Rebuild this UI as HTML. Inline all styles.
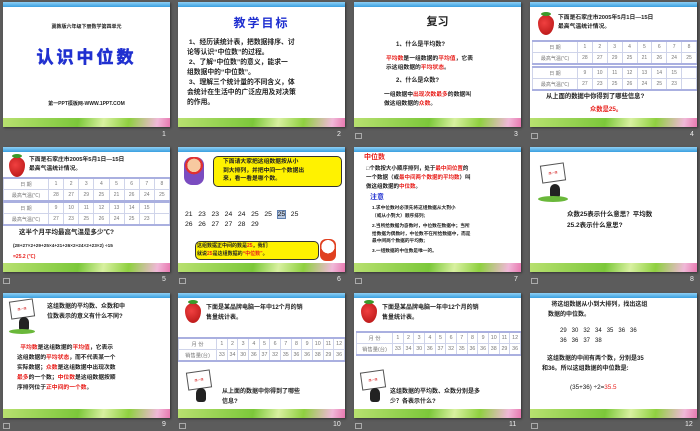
<!DOCTYPE html>
<html><head><meta charset="utf-8">
<style>
body{margin:0;width:700px;height:431px;background:#5c5c5c;position:relative;overflow:hidden;font-family:"Liberation Sans","Noto Sans CJK SC",sans-serif;}
.s{position:absolute;width:167px;height:125px;background:#fff;overflow:hidden;box-shadow:1px 1px 2px #333;}
.s:before{content:"";position:absolute;left:0;top:0;width:100%;height:5px;background:linear-gradient(#8fd0f5,#3a9fe0);}
.s:after{content:"";position:absolute;left:0;bottom:0;width:100%;height:9px;background:linear-gradient(100deg,#b8e070 0%,#7cc83a 45%,#d8f0a0 60%,#8fd040 75%,#f0b8d8 92%,#e878b0 100%);}
.t{position:absolute;font-weight:bold;color:#222;white-space:nowrap;line-height:1.3;}
.r{color:#e8201c}
.b{color:#2030d0}
.n{position:absolute;color:#eee;font-size:7px;}
.ic{position:absolute;width:5px;height:4px;border:1px solid #aaa;}
.tb{position:absolute;border-collapse:collapse;font-size:5px;color:#777;table-layout:fixed;}
.tb td{border:1px solid #cfd4ea;text-align:center;padding:0;height:10px;}
.tb tr:first-child td{border-top:2px solid #aab0e0}
.tb tr:last-child td{border-bottom:2px solid #aab0e0}
.straw{position:absolute;width:16px;height:20px;background:radial-gradient(circle at 40% 40%,#f04040,#b01010);border-radius:50% 50% 50% 50%/40% 40% 60% 60%;}
.straw:before{content:"";position:absolute;left:3px;top:-3px;width:10px;height:4px;background:#3a9a2a;border-radius:50%;}
.bal{position:absolute;background:#fff200;border:1px solid #333;border-radius:5px;}
.sign{position:absolute;width:22px;height:16px;border:1px solid #555;background:#fff;transform:rotate(-8deg);font-size:3px;color:#c00;text-align:center;line-height:16px;}
.dog{position:absolute;width:10px;height:14px;background:#222;border-radius:5px 5px 3px 3px;}
</style></head><body>

<div class="s" style="left:3px;top:2px">
<div class="t" style="left:0;width:167px;text-align:center;top:22px;font-size:5px">冀教版六年级下册数学第四单元</div>
<div class="t b" style="left:0;width:167px;text-align:center;top:45px;font-size:17px;letter-spacing:3px;-webkit-text-stroke:0.6px #2030d0">认识中位数</div>
<div class="t" style="left:0;width:167px;text-align:center;top:99px;font-size:5px">第一PPT模板网-WWW.1PPT.COM</div>
</div>
<div class="n" style="left:162px;top:131px">1</div>

<div class="s" style="left:178px;top:2px">
<div class="t b" style="left:0;width:167px;text-align:center;top:14px;font-size:12px;letter-spacing:2px">教学目标</div>
<div class="t" style="left:9px;top:36px;font-size:6.8px;line-height:10px">&nbsp;1、经历读统计表，把数据排序、讨<br>论等认识“中位数”的过程。<br>&nbsp;2、了解“中位数”的意义，能求一<br>组数据中的“中位数”。<br>&nbsp;3、理解三个统计量的不同含义，体<br>会统计在生活中的广泛应用及对决策<br>的作用。</div>
</div>
<div class="n" style="left:337px;top:131px">2</div>

<div class="s" style="left:354px;top:2px">
<div class="t" style="left:0;width:167px;text-align:center;top:13px;font-size:11px">复习</div>
<div class="t" style="left:42px;top:40px;font-size:6px">1、什么是平均数?</div>
<div class="t" style="left:32px;top:53px;font-size:5.8px;line-height:9px"><span class="r">平均数</span>是一组数据的<span class="r">平均值</span>，它表<br>示这组数据的<span class="r">平均状态</span>。</div>
<div class="t" style="left:42px;top:76px;font-size:6px">2、什么是众数?</div>
<div class="t" style="left:30px;top:89px;font-size:5.8px;line-height:9px">一组数据中<span class="r">出现次数最多</span>的数据叫<br>做这组数据的<span class="r">众数</span>。</div>
</div>
<div class="ic" style="left:355px;top:133px"></div><div class="n" style="left:514px;top:131px">3</div>

<div class="s" style="left:530px;top:2px">
<div class="straw" style="left:8px;top:13px"></div>
<div class="t" style="left:28px;top:12px;font-size:5.8px;line-height:9px">下面是石家庄市2005年5月1日—15日<br>最高气温统计情况。</div>
<table class="tb" style="left:2px;top:38px;width:165px"><col style="width:45px"><tr><td>日 期</td><td>1</td><td>2</td><td>3</td><td>4</td><td>5</td><td>6</td><td>7</td><td>8</td></tr><tr><td>最高气温(℃)</td><td>28</td><td>27</td><td>29</td><td>25</td><td>21</td><td>26</td><td>24</td><td>25</td></tr></table>
<table class="tb" style="left:2px;top:64px;width:165px"><col style="width:45px"><tr><td>日 期</td><td>9</td><td>10</td><td>11</td><td>12</td><td>13</td><td>14</td><td>15</td><td></td></tr><tr><td>最高气温(℃)</td><td>27</td><td>23</td><td>25</td><td>26</td><td>24</td><td>25</td><td>23</td><td></td></tr></table>
<div class="t" style="left:16px;top:91px;font-size:6.3px">从上面的数据中你得到了哪些信息?</div>
<div class="t r" style="left:60px;top:104px;font-size:6.3px">众数是25。</div>
</div>
<div class="ic" style="left:531px;top:133px"></div><div class="n" style="left:690px;top:131px">4</div>

<div class="s" style="left:3px;top:147px">
<div class="straw" style="left:6px;top:10px"></div>
<div class="t" style="left:26px;top:9px;font-size:5.8px;line-height:9px">下面是石家庄市2005年5月1日—15日<br>最高气温统计情况。</div>
<table class="tb" style="left:0;top:30px;width:167px"><col style="width:45px"><tr><td>日 期</td><td>1</td><td>2</td><td>3</td><td>4</td><td>5</td><td>6</td><td>7</td><td>8</td></tr><tr><td>最高气温(℃)</td><td>28</td><td>27</td><td>29</td><td>25</td><td>21</td><td>26</td><td>24</td><td>25</td></tr></table>
<table class="tb" style="left:0;top:54px;width:167px"><col style="width:45px"><tr><td>日 期</td><td>9</td><td>10</td><td>11</td><td>12</td><td>13</td><td>14</td><td>15</td><td></td></tr><tr><td>最高气温(℃)</td><td>27</td><td>23</td><td>25</td><td>26</td><td>24</td><td>25</td><td>23</td><td></td></tr></table>
<div class="t" style="left:16px;top:82px;font-size:6.5px">这半个月平均最高气温是多少℃?</div>
<div class="t" style="left:10px;top:96px;font-size:4.7px">(28+27×2+29+25×4+21+26×2+24×2+23×2) ÷15</div>
<div class="t r" style="left:10px;top:107px;font-size:5px">=25.2 (℃)</div>
</div>
<div class="ic" style="left:3px;top:278px"></div><div class="n" style="left:162px;top:276px">5</div>

<div class="s" style="left:178px;top:147px">
<div style="position:absolute;left:6px;top:10px;width:20px;height:28px;background:radial-gradient(circle at 50% 30%,#f7c9a0 30%,#e03030 31%,#e03030 40%,#7a4cc0 41%);border-radius:8px"></div>
<div class="bal" style="left:35px;top:9px;width:127px;height:29px"></div>
<div class="t" style="left:45px;top:11px;font-size:5.8px;line-height:8.5px">下面请大家把这组数据按从小<br>到大排列，并把中间一个数据出<br>来，看一看是哪个数。</div>
<div class="t" style="left:7px;top:63px;font-size:6.8px;font-weight:normal;line-height:10px;color:#111">21&nbsp;&nbsp;&nbsp;23&nbsp;&nbsp;&nbsp;23&nbsp;&nbsp;&nbsp;24&nbsp;&nbsp;&nbsp;24&nbsp;&nbsp;&nbsp;25&nbsp;&nbsp;&nbsp;25&nbsp;&nbsp;&nbsp;<span style="background:#b8c8e0;outline:1px solid #6080b0">25</span>&nbsp;&nbsp;&nbsp;25<br>26&nbsp;&nbsp;&nbsp;26&nbsp;&nbsp;&nbsp;27&nbsp;&nbsp;&nbsp;27&nbsp;&nbsp;&nbsp;28&nbsp;&nbsp;&nbsp;29</div>
<div class="bal" style="left:17px;top:94px;width:122px;height:17px"></div>
<div class="t" style="left:19px;top:95px;font-size:5px;line-height:8px">这组数据正中间的数是<span class="r">25</span>，我们<br>就说<span class="r">25</span>是这组数据的<span class="r">“中位数”</span>。</div>
<div style="position:absolute;left:142px;top:92px;width:16px;height:22px;background:radial-gradient(circle at 50% 35%,#fff 40%,#e04020 41%);border-radius:6px"></div>
</div>
<div class="ic" style="left:179px;top:278px"></div><div class="n" style="left:337px;top:276px">6</div>

<div class="s" style="left:354px;top:147px">
<div class="t r" style="left:10px;top:6px;font-size:7px">中位数</div>
<div class="t" style="left:12px;top:18px;font-size:5.5px;line-height:9px">□个数按大小顺序排列，处于<span class="r">最中间位置</span>的<br>一个数据（或<span class="r">最中间两个数据的平均数</span>）叫<br>做这组数据的<span class="r">中位数</span>。</div>
<div class="t b" style="left:16px;top:46px;font-size:7px">注意</div>
<div class="t" style="left:18px;top:57px;font-size:4.7px;line-height:7.5px">1.求中位数时必须先将这组数据从大到小<br>（或从小到大）顺序排列;</div>
<div class="t" style="left:18px;top:75px;font-size:4.7px;line-height:7.5px">2.当所给数据为奇数时，中位数在数据中；当所<br>给数据为偶数时，中位数不在所给数据中，而是<br>最中间两个数据的平均数;</div>
<div class="t" style="left:18px;top:101px;font-size:4.7px">3.一组数据的中位数是唯一的。</div>
</div>
<div class="ic" style="left:355px;top:278px"></div><div class="n" style="left:514px;top:276px">7</div>

<div class="s" style="left:530px;top:147px">
<div class="sign" style="left:11px;top:17px">想一想</div>
<div class="dog" style="left:20px;top:37px"></div>
<div style="position:absolute;left:8px;top:49px;width:30px;height:6px;background:#6ab83a;border-radius:50%"></div>
<div class="t" style="left:37px;top:62px;font-size:6.5px;line-height:11px">众数25表示什么意思？平均数<br>25.2表示什么意思?</div>
</div>
<div class="ic" style="left:531px;top:278px"></div><div class="n" style="left:690px;top:276px">8</div>

<div class="s" style="left:3px;top:293px">
<div class="sign" style="left:7px;top:7px">想一想</div>
<div class="dog" style="left:16px;top:24px"></div>
<div style="position:absolute;left:6px;top:36px;width:26px;height:5px;background:#6ab83a;border-radius:50%"></div>
<div class="t" style="left:44px;top:9px;font-size:6px;line-height:10px">这组数据的平均数、众数和中<br>位数表示的意义有什么不同?</div>
<div class="t" style="left:14px;top:50px;font-size:5.8px;line-height:10px">&nbsp;&nbsp;<span class="r">平均数</span>是这组数据的<span class="r">平均值</span>，它表示<br>这组数据的<span class="r">平均状态</span>，而不代表某一个<br>实际数据；<span class="r">众数</span>是这组数据中出现次数<br><span class="r">最多</span>的一个数；<span class="r">中位数</span>是这组数据按顺<br>序排列位于<span class="r">正中间的一个数</span>。</div>
</div>
<div class="ic" style="left:3px;top:423px"></div><div class="n" style="left:162px;top:421px">9</div>

<div class="s" style="left:178px;top:293px">
<div class="straw" style="left:7px;top:10px"></div>
<div class="t" style="left:28px;top:10px;font-size:6px;line-height:10px">下面是某品牌电脑一年中12个月的销<br>售量统计表。</div>
<table class="tb" style="left:0;top:44px;width:167px;font-size:5.3px"><col style="width:38px"><tr><td>月 份</td><td>1</td><td>2</td><td>3</td><td>4</td><td>5</td><td>6</td><td>7</td><td>8</td><td>9</td><td>10</td><td>11</td><td>12</td></tr><tr><td>销售量(台)</td><td>33</td><td>34</td><td>30</td><td>36</td><td>37</td><td>32</td><td>35</td><td>36</td><td>36</td><td>38</td><td>29</td><td>36</td></tr></table>
<div class="sign" style="left:9px;top:78px">想一想</div>
<div class="dog" style="left:18px;top:95px"></div>
<div class="t" style="left:44px;top:94px;font-size:6px;line-height:10px">从上面的数据中你得到了哪些<br>信息?</div>
</div>
<div class="ic" style="left:179px;top:423px"></div><div class="n" style="left:333px;top:421px">10</div>

<div class="s" style="left:354px;top:293px">
<div class="straw" style="left:7px;top:10px"></div>
<div class="t" style="left:28px;top:10px;font-size:6px;line-height:10px">下面是某品牌电脑一年中12个月的销<br>售量统计表。</div>
<table class="tb" style="left:2px;top:38px;width:165px;font-size:5.3px"><col style="width:36px"><tr><td>月 份</td><td>1</td><td>2</td><td>3</td><td>4</td><td>5</td><td>6</td><td>7</td><td>8</td><td>9</td><td>10</td><td>11</td><td>12</td></tr><tr><td>销售量(台)</td><td>33</td><td>34</td><td>30</td><td>36</td><td>37</td><td>32</td><td>35</td><td>36</td><td>36</td><td>38</td><td>29</td><td>36</td></tr></table>
<div class="sign" style="left:7px;top:78px">想一想</div>
<div class="dog" style="left:16px;top:95px"></div>
<div class="t" style="left:36px;top:94px;font-size:6px;line-height:10px">这组数据的平均数、众数分别是多<br>少？各表示什么?</div>
</div>
<div class="ic" style="left:355px;top:423px"></div><div class="n" style="left:509px;top:421px">11</div>

<div class="s" style="left:530px;top:293px">
<div class="t" style="left:18px;top:7px;font-size:6px;line-height:10px">&nbsp;&nbsp;将这组数据从小到大排列，找出这组<br>数据的中位数。</div>
<div class="t" style="left:30px;top:33px;font-size:6px;font-weight:normal;line-height:10px;color:#111">29&nbsp;&nbsp;&nbsp;30&nbsp;&nbsp;&nbsp;32&nbsp;&nbsp;&nbsp;34&nbsp;&nbsp;&nbsp;35&nbsp;&nbsp;&nbsp;36&nbsp;&nbsp;&nbsp;36<br>36&nbsp;&nbsp;&nbsp;36&nbsp;&nbsp;&nbsp;37&nbsp;&nbsp;&nbsp;38</div>
<div class="t" style="left:12px;top:61px;font-size:6px;line-height:10px">&nbsp;&nbsp;&nbsp;这组数据的中间有两个数，分别是35<br>和36。所以这组数据的中位数是:</div>
<div class="t" style="left:40px;top:91px;font-size:6.3px;font-weight:normal;color:#111">(35+36) ÷2=<span class="r">35.5</span></div>
</div>
<div class="ic" style="left:531px;top:423px"></div><div class="n" style="left:685px;top:421px">12</div>

</body></html>
